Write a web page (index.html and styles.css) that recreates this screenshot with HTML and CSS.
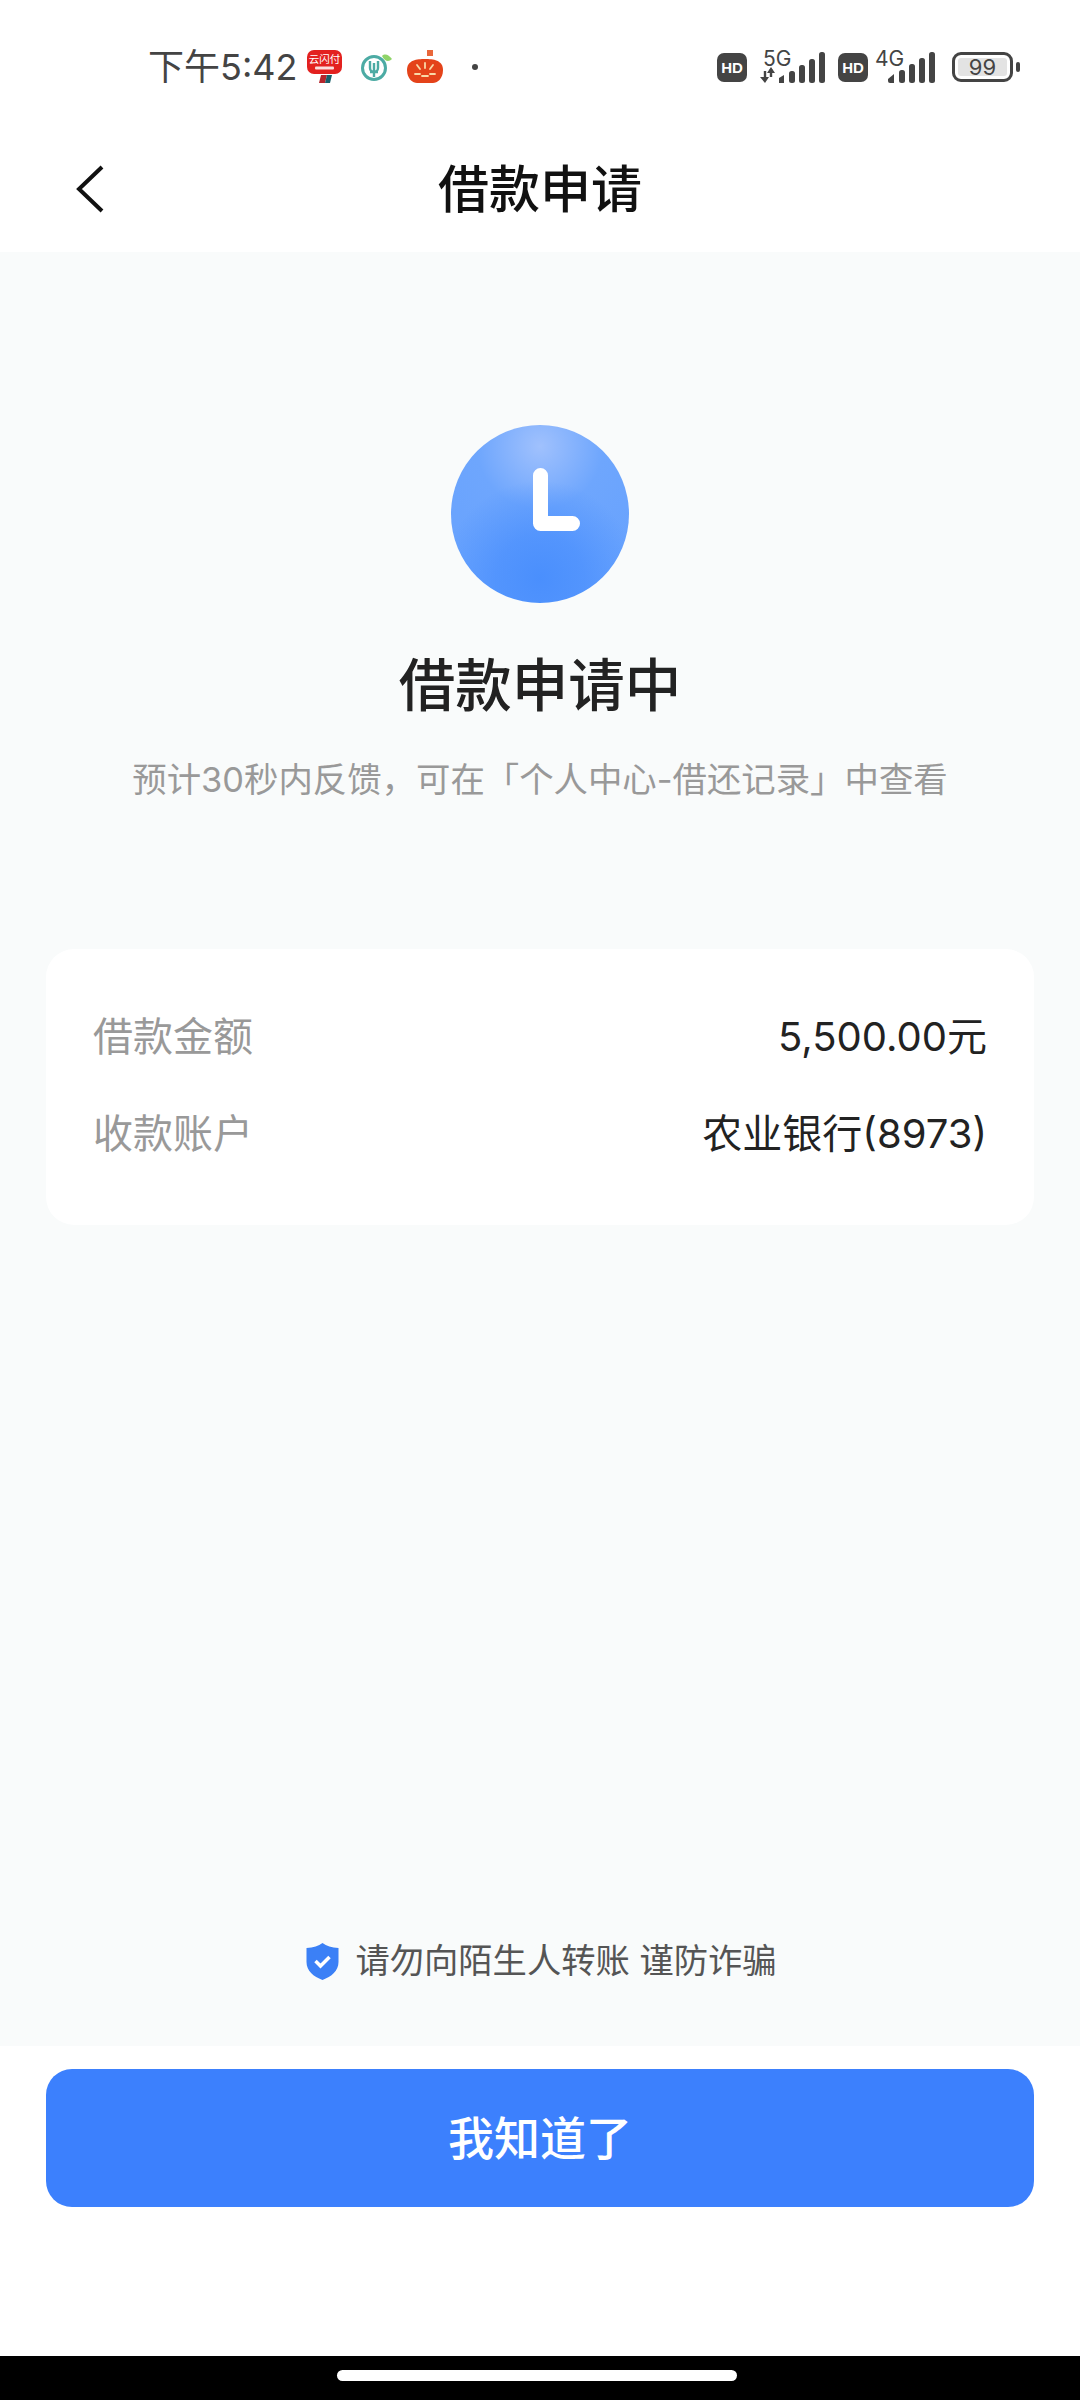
FILE: index.html
```html
<!DOCTYPE html>
<html lang="zh-CN">
<head>
    <meta charset="UTF-8">
    <meta name="viewport" content="width=device-width, initial-scale=1.0">
    <title>借款申请</title>
    <link rel="stylesheet" href="styles.css">
</head>
<body>
    <div class="page">
        <div class="statusbar">
            <div class="status-left">
                <span class="time">下午5:42</span>
                <svg class="ic-union" width="35" height="34" viewBox="0 0 35 34">
                    <path d="M7 0h21a7 7 0 0 1 7 7v10a7 7 0 0 1-7 7H7a7 7 0 0 1-7-7V7a7 7 0 0 1 7-7z" fill="#e3211f"/>
                    <path d="M14 25h6l-2 8h-6z" fill="#b5262c"/>
                    <path d="M20 25h5l-2 8h-5z" fill="#17606b"/>
                    <text x="17.500" y="13" text-anchor="middle" class="union-name">云闪付</text>
                    <rect x="8" y="16.500" width="19" height="3" rx="1" fill="#fff" opacity=".85"/>
                </svg>
                <svg class="ic-abc" width="31" height="27" viewBox="0 0 31 27">
                    <circle cx="13" cy="14" r="11.500" fill="none" stroke="#4caba4" stroke-width="3"/>
                    <path d="M9 7v7a4 4 0 0 0 8 0V7M13 9v14M9 18h8" fill="none" stroke="#4caba4" stroke-width="2.400"/>
                    <path d="M21 2c3-3 7-1 10 3-3 3-7 3-10-3z" fill="#8fd468"/>
                </svg>
                <svg class="ic-tomato" width="36" height="34" viewBox="0 0 36 34">
                    <rect x="20" y="0" width="6" height="6" fill="#e9673a"/>
                    <path d="M18 9c8 0 18 1 18 11 0 9-6 13-10 13H10C6 33 0 29 0 20 0 10 10 9 18 9z" fill="#e4431a"/>
                    <path d="M18 13v5M10 15l3 4M26 15l-3 4M8 24h5M23 24h5M15 26h6" stroke="#f9d9a8" stroke-width="1.800" stroke-linecap="round"/>
                </svg>
                <span class="dot"></span>
            </div>
            <div class="status-right">
                <span class="hd">HD</span>
                <div class="net net-5g">
                    <span class="net-label">5G</span>
                    <svg width="66" height="31" viewBox="0 0 66 31">
                        <path d="M5 19v8M11 17v8" stroke="#444" stroke-width="2.400"/>
                        <path d="M0 25h9l-4 6zM7 21l4-6 4 6z" fill="#444"/>
                        <path d="M19 26l5-3v8h-5z" fill="#444"/>
                        <rect x="29" y="19" width="6" height="12" rx="2.500" fill="#444"/>
                        <rect x="39" y="13" width="6" height="18" rx="2.500" fill="#444"/>
                        <rect x="49" y="7" width="6" height="24" rx="2.500" fill="#444"/>
                        <rect x="59" y="0" width="6" height="31" rx="2.500" fill="#444"/>
                    </svg>
                </div>
                <span class="hd">HD</span>
                <div class="net net-4g">
                    <span class="net-label">4G</span>
                    <svg width="48" height="31" viewBox="0 0 48 31">
                        <path d="M0 27l6-5v9H2a2 2 0 0 1-2-2z" fill="#444"/>
                        <rect x="11" y="18" width="6" height="13" rx="2.500" fill="#444"/>
                        <rect x="21" y="12" width="6" height="19" rx="2.500" fill="#444"/>
                        <rect x="31" y="6" width="6" height="25" rx="2.500" fill="#444"/>
                        <rect x="41" y="0" width="6" height="31" rx="2.500" fill="#444"/>
                    </svg>
                </div>
                <div class="battery">
                    <div class="battery-body"><span>99</span></div>
                    <span class="battery-nub"></span>
                </div>
            </div>
        </div>

        <div class="nav">
            <svg class="back" width="30" height="48" viewBox="0 0 30 48">
                <path d="M27 2L4 24l23 22" fill="none" stroke="#111" stroke-width="4"/>
            </svg>
            <h1>借款申请</h1>
        </div>

        <div class="content">
            <div class="clock">
                <svg class="clock-hand" width="47" height="63" viewBox="0 0 47 63">
                    <path d="M7.500 7.500v48h32" fill="none" stroke="#fff" stroke-width="15" stroke-linecap="round" stroke-linejoin="round"/>
                </svg>
            </div>
            <h2>借款申请中</h2>
            <p class="hint">预计30秒内反馈，可在「个人中心-借还记录」中查看</p>

            <div class="card">
                <div class="row">
                    <span class="label">借款金额</span>
                    <span class="value">5,500.00元</span>
                </div>
                <div class="row">
                    <span class="label">收款账户</span>
                    <span class="value">农业银行(8973)</span>
                </div>
            </div>

            <div class="notice">
                <svg width="33" height="37" viewBox="0 0 33 37">
                    <path d="M16.500 0c4 3 9 4.500 16 5v14c0 9-7 14.500-16 18C7.500 33.500.5 28 .5 19V5c7-.5 12-2 16-5z" fill="#3b80f6"/>
                    <path d="M9.500 18l5 5 9-9" fill="none" stroke="#fff" stroke-width="3.500"/>
                </svg>
                <span>请勿向陌生人转账 谨防诈骗</span>
            </div>
        </div>

        <div class="footer">
            <button class="btn">我知道了</button>
        </div>

        <div class="homebar"><span></span></div>
    </div>
</body>
</html>
```

FILE: styles.css
```css
* {
    margin: 0;
    padding: 0;
    box-sizing: border-box;
}

body {
    font-family: Inter, 'Noto Sans CJK SC', sans-serif;
    background: #fff;
    color: #222;
}

.page {
    width: 1080px;
    height: 2400px;
    display: flex;
    flex-direction: column;
}

/* Status bar */
.statusbar {
    height: 90px;
    padding: 44px 60px 0 148px;
    display: flex;
    justify-content: space-between;
    align-items: flex-start;
    color: #444;
}

.status-left {
    display: flex;
    align-items: center;
    height: 46px;
}

.time {
    font-size: 36px;
    line-height: 46px;
    width: 159px;
    white-space: nowrap;
}

.union-name {
    font-size: 10.500px;
    fill: #fff;
}

.ic-abc {
    margin-left: 19px;
}

.ic-tomato {
    margin-left: 15px;
}

.dot {
    width: 6px;
    height: 6px;
    border-radius: 50%;
    background: #444;
    margin-left: 29px;
}

.status-right {
    display: flex;
    align-items: flex-start;
    margin-top: 8px;
}

.hd {
    width: 30px;
    height: 29px;
    margin-top: 1px;
    border-radius: 7px;
    background: #444;
    color: #fff;
    font-family: 'Liberation Sans', sans-serif;
    font-size: 15px;
    font-weight: bold;
    line-height: 29px;
    text-align: center;
}

.net {
    position: relative;
    display: flex;
    justify-content: flex-end;
}

.net-5g {
    width: 66px;
    margin: 0 12px 0 13px;
}

.net-4g {
    width: 61px;
    margin: 0 16px 0 7px;
}

.net-label {
    position: absolute;
    top: -4px;
    left: 3px;
    font-size: 21px;
    line-height: 22px;
    color: #444;
}

.net-4g .net-label {
    left: 0;
}

.battery {
    display: flex;
    align-items: center;
    height: 30px;
}

.battery-body {
    width: 61px;
    height: 30px;
    padding: 3px;
    border: 3px solid #444;
    border-radius: 9px;
}

.battery-body span {
    display: block;
    height: 18px;
    border-radius: 3px;
    background: #e3e3e3;
    font-size: 22px;
    line-height: 18px;
    text-align: center;
    color: #444;
}

.battery-nub {
    width: 4px;
    height: 10px;
    margin-left: 3px;
    border-radius: 2px;
    background: #444;
}

/* Title bar */
.nav {
    position: relative;
    height: 162px;
    display: flex;
    align-items: center;
    justify-content: center;
    padding-top: 30px;
}

.back {
    position: absolute;
    left: 75px;
    top: 75px;
}

.nav h1 {
    font-size: 51px;
    font-weight: 500;
    color: #111;
}

/* Main area */
.content {
    flex: 1;
    background: #f9fbfb;
    padding: 173px 46px 0;
    display: flex;
    flex-direction: column;
    align-items: center;
}

.clock {
    position: relative;
    width: 178px;
    height: 178px;
    border-radius: 50%;
    background: radial-gradient(circle at 50% 86%, #4a8ffd 0, rgba(74, 143, 253, 0.7) 25%, rgba(74, 143, 253, 0) 55%),
                radial-gradient(circle at 50% 12%, #a0c1fd 0, #6ea6fd 35%, #64a0fe 100%);
}

.clock-hand {
    position: absolute;
    left: 82px;
    top: 43px;
}

.content h2 {
    margin-top: 47px;
    font-size: 56.500px;
    font-weight: 500;
    line-height: 72px;
    color: #222;
}

.hint {
    margin-top: 34px;
    font-size: 34.400px;
    line-height: 48px;
    color: #999;
    white-space: nowrap;
}

.card {
    width: 100%;
    height: 276px;
    margin-top: 145px;
    padding: 56px 47px 0;
    background: #fff;
    border-radius: 28px;
}

.row {
    display: flex;
    justify-content: space-between;
    align-items: center;
    height: 58px;
    margin-bottom: 39px;
    font-size: 40px;
}

.label {
    color: #999;
}

.value {
    color: #222;
}

.notice {
    margin-top: auto;
    margin-bottom: 61px;
    padding-left: 3px;
    display: flex;
    align-items: center;
    gap: 16px;
    font-size: 34.300px;
    line-height: 48px;
    color: #555;
}

/* Bottom action */
.footer {
    height: 310px;
    padding: 23px 46px 0;
    background: #fff;
}

.btn {
    display: block;
    width: 100%;
    height: 138px;
    padding-bottom: 7px;
    border: none;
    border-radius: 26px;
    background: #3c80fd;
    color: #fff;
    font-family: inherit;
    font-size: 46px;
    font-weight: 500;
}

.homebar {
    height: 44px;
    background: #000;
    display: flex;
    justify-content: center;
    padding: 14px 7px 0 0;
}

.homebar span {
    width: 400px;
    height: 11px;
    border-radius: 6px;
    background: #fff;
}
```
